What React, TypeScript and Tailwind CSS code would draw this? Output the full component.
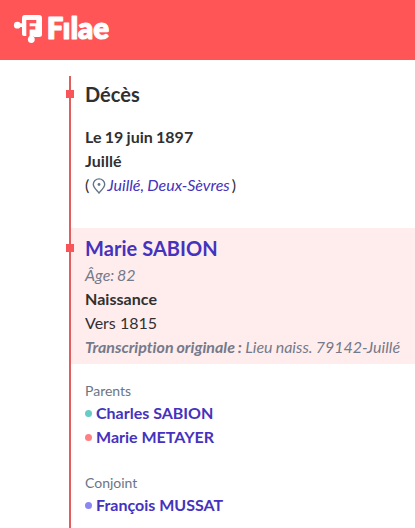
import type { ReactNode } from "react";

function Logo() {
  return (
    <svg width="110" height="57" viewBox="0 -13 110 57" className="ml-[13px] block" role="img" aria-label="Filae">
      <g fill="#fff">
        <path d="M12 2H26Q29 2 29 5V21.500Q29 24 26 24H21V16H9V5Q9 2 12 2Z" />
        <path d="M9 9H22V23H11Q9 23 9 21Z" />
        <circle cx="4.300" cy="12.200" r="3.400" />
        <path d="M4 10.300H10V14H4Z" />
        <circle cx="18.300" cy="26.500" r="3.400" />
        <path d="M16.300 20H20.500V26H16.300Z" />
      </g>
      <path d="M13.300 23V7H23.300V10.200H16.600V13.300H22.300V16.400H16.600V23Z" fill="#ff5557" />
      <text
        x="33.800"
        y="26"
        textLength="62.500"
        lengthAdjust="spacingAndGlyphs"
        fill="#fff"
        stroke="#fff"
        strokeWidth="0.9"
        strokeLinejoin="round"
        className="font-[Lato] text-[31px] font-extrabold"
      >
        Fılae
      </text>
    </svg>
  );
}

function Marker({ className }: { className: string }) {
  return <span className={`absolute -left-[19px] size-2 bg-[#f95457] ${className}`} />;
}

function Pin() {
  return (
    <svg width="16" height="16" viewBox="0 0 16 16" fill="none" stroke="#64748b" strokeWidth="1.400" className="relative top-px left-[0.5px] mr-px shrink-0">
      <path d="M8 15C6 12.500 2.300 9.600 2.300 6.300A5.700 5.400 0 0 1 13.700 6.300C13.700 9.600 10 12.500 8 15Z" />
      <circle cx="8" cy="6.500" r="1.400" fill="#64748b" stroke="none" />
    </svg>
  );
}

function Person({ dot, children }: { dot: string; children: ReactNode }) {
  return (
    <li className="flex h-6 items-center font-bold text-[#4532bd]">
      <span className={`mr-1 size-[7px] rounded-full ${dot}`} />
      {children}
    </li>
  );
}

export default function App() {
  return (
    <div className="h-[528px] w-[415px] overflow-hidden bg-white font-[Lato,sans-serif] text-base leading-6 text-[#303033] [font-variant-ligatures:none]">
      <header className="flex h-[60px] items-start bg-[#ff5557]">
        <Logo />
      </header>
      <main className="mt-4 ml-[69px] h-[452px] border-l-2 border-[#e25e5e]">
        <section className="relative ml-3.5 h-[152px] pt-[3px]">
          <Marker className="top-[14px]" />
          <h2 className="text-xl leading-[30px] font-bold">Décès</h2>
          <p className="mt-4 font-bold [word-spacing:-0.6px]">Le 19 juin 1897</p>
          <p className="font-bold tracking-[0.05px]">Juillé</p>
          <p className="flex items-center">
            <span className="mr-px">(</span>
            <Pin />
            <em className="text-[#4532bd] [word-spacing:-0.6px]">Juillé, Deux-Sèvres</em>
            <span className="ml-[2px]">)</span>
          </p>
        </section>
        <section className="h-[136px] bg-[#ffeded] pl-3.5">
          <div className="relative pt-[5px]">
            <Marker className="top-4" />
            <h2 className="text-xl leading-[30px] font-bold tracking-[0.05px] text-[#4532bd]">Marie SABION</h2>
            <p className="text-[#75798a] italic [word-spacing:-1px]">Âge: 82</p>
            <p className="font-bold tracking-[0.05px]">Naissance</p>
            <p>Vers 1815</p>
            <p className="whitespace-nowrap text-[#75798a] italic [word-spacing:-0.6px]">
              <strong>Transcription originale :</strong> Lieu naiss. 79142-Juillé
            </p>
          </div>
        </section>
        <section className="ml-3.5 pt-[17px]">
          <h3 className="text-sm leading-5 text-[#6b7585]">Parents</h3>
          <ul>
            <Person dot="bg-[#67cbc8]">Charles SABION</Person>
            <Person dot="bg-[#ff8083]">Marie METAYER</Person>
          </ul>
          <h3 className="mt-6 text-sm leading-5 text-[#6b7585]">Conjoint</h3>
          <ul>
            <Person dot="bg-[#8a87f2]">François MUSSAT</Person>
          </ul>
        </section>
      </main>
    </div>
  );
}
